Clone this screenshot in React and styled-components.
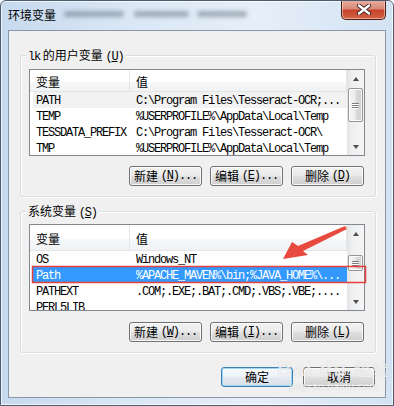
import React from 'react';
import styled, { createGlobalStyle } from 'styled-components';

const GlobalStyle = createGlobalStyle`
  html, body { margin: 0; padding: 0; background: #fff; }
  body { font-family: "Noto Sans CJK SC", sans-serif; font-size: 12px; color: #000; }
`;

const Window = styled.div`
  position: relative;
  width: 394px;
  height: 406px;
  box-sizing: border-box;
  border: 1px solid #4d5d70;
  border-radius: 6px 6px 0 0;
  background: linear-gradient(to right, #c6d9ee, #d9e6f4 30%, #e6eff9 65%, #d3e2f2);
  box-shadow: inset 0 0 0 1px rgba(255, 255, 255, 0.7);
  display: flex;
  flex-direction: column;
  overflow: hidden;
`;

const TitleBar = styled.div`
  height: 29px;
  display: flex;
  align-items: flex-start;
`;

const Title = styled.span`
  padding: 6px 0 0 7px;
  line-height: 16px;
  font-size: 12px;
  white-space: nowrap;
`;

const Ghost = styled.div`
  margin: 10px 0 0 ${p => p.$gap}px;
  width: ${p => p.$w}px;
  height: 6px;
  border-radius: 3px;
  background: rgba(40, 55, 75, 0.35);
  filter: blur(2px);
`;

const CloseButton = styled.div`
  width: 45px;
  height: 20px;
  box-sizing: border-box;
  margin: -1px 7px 0 auto;
  border: 1px solid #4a1f16;
  border-top: none;
  border-radius: 0 0 5px 5px;
  background: linear-gradient(#eab0a2, #d98a78 45%, #c54229 55%, #d46446);
  box-shadow: inset 0 0 0 1px rgba(255, 220, 210, 0.55);
  display: flex;
  align-items: center;
  justify-content: center;
`;

const Client = styled.div`
  flex: 1;
  margin: 0 7px 7px 7px;
  border: 1px solid #8896a8;
  background: #f0f0f0;
  display: flex;
  flex-direction: column;
`;

const Group = styled.div`
  position: relative;
  margin: ${p => p.$top}px 9px 0 11px;
  border: 1px solid #d5dfe5;
  border-radius: 3px;
  box-shadow: inset 1px 1px 0 #fff, 1px 1px 0 #fff;
  padding: ${p => p.$pad}px 10px 10px 8px;
  display: flex;
  flex-direction: column;
`;

const Legend = styled.span`
  position: absolute;
  left: 5px;
  top: -8px;
  padding: 0 2px;
  line-height: 14px;
  background: #f0f0f0;
  white-space: nowrap;
`;

const Latin = styled.span`
  font-family: "Liberation Mono", monospace;
  font-size: 12px;
  letter-spacing: -1.2px;
`;

const List = styled.div`
  height: 87px;
  box-sizing: border-box;
  border: 1px solid #828790;
  background: #fff;
  display: flex;
  overflow: hidden;
`;

const ListBody = styled.div`
  flex: 1;
  display: flex;
  flex-direction: column;
  overflow: hidden;
`;

const Header = styled.div`
  flex: none;
  height: ${p => p.$h}px;
  display: grid;
  grid-template-columns: 100px 1fr;
  background: linear-gradient(#ffffff, #ffffff 55%, #f7f8fa 55%, #f1f2f4);
  border-bottom: 1px solid #e5e5e5;
`;

const HeaderCell = styled.div`
  display: flex;
  align-items: center;
  padding: 2px 0 0 6px;
  border-right: 1px solid #e5e5e5;
  font-size: 12px;
`;

const Row = styled.div`
  flex: none;
  height: 16px;
  margin-left: 3px;
  display: grid;
  grid-template-columns: 97px 1fr;
  align-items: center;
  white-space: nowrap;
  overflow: hidden;
  background: ${p => (p.$selected ? '#3399ff' : p.$hot ? '#f2f2f2' : 'transparent')};
  color: ${p => (p.$selected ? '#fff' : '#000')};
  font-family: "Liberation Mono", monospace;
  font-size: 12px;
  letter-spacing: -1.2px;
  line-height: 16px;
  padding-top: 1px;
  box-sizing: border-box;
`;

const Cell = styled.span`
  padding-left: ${p => p.$pad}px;
  overflow: hidden;
`;

const ScrollBar = styled.div`
  flex: none;
  width: 17px;
  display: flex;
  flex-direction: column;
  background: linear-gradient(to right, #e2e3e5, #eeeff0 30%, #f5f5f6);
`;

const ArrowBox = styled.div`
  flex: none;
  height: 17px;
  display: flex;
  align-items: center;
  justify-content: center;
`;

const Arrow = styled.span`
  width: 0;
  height: 0;
  border-left: 3.5px solid transparent;
  border-right: 3.5px solid transparent;
  ${p => (p.$down ? 'border-top: 4px solid #4e4e4e;' : 'border-bottom: 4px solid #4e4e4e;')}
`;

const Track = styled.div`
  flex: 1;
  display: flex;
  flex-direction: column;
  align-items: center;
`;

const Thumb = styled.div`
  margin-top: ${p => p.$top}px;
  width: 15px;
  height: ${p => p.$h}px;
  box-sizing: border-box;
  border: 1px solid #979797;
  border-radius: 2px;
  background: linear-gradient(to right, #f5f5f5, #ececec 45%, #dadada 55%, #cfcfcf);
  box-shadow: inset 0 0 0 1px rgba(255, 255, 255, 0.8);
  display: flex;
  flex-direction: column;
  align-items: center;
  justify-content: center;
  gap: 1px;
`;

const Grip = styled.span`
  width: 7px;
  height: 1px;
  background: #7d7d7d;
  box-shadow: 0 1px 0 #fff;
`;

const ButtonRow = styled.div`
  display: flex;
  justify-content: flex-end;
  gap: ${p => p.$gap}px;
  margin-top: ${p => p.$top}px;
  padding-right: ${p => p.$right}px;
`;

const Button = styled.div`
  width: ${p => p.$w}px;
  height: 20px;
  box-sizing: border-box;
  border: 1px solid ${p => (p.$default ? '#3c7fb1' : '#707070')};
  border-radius: 3px;
  background: ${p =>
    p.$default
      ? 'linear-gradient(#f7fbfe, #eef4f9 45%, #e2e9ef 55%, #d8e2ea)'
      : 'linear-gradient(#f2f2f2, #ebebeb 45%, #dddddd 55%, #cfcfcf)'};
  box-shadow: ${p =>
    p.$default ? 'inset 0 0 0 1px #9fd5f5' : 'inset 0 0 0 1px rgba(255, 255, 255, 0.85)'};
  display: flex;
  align-items: center;
  justify-content: center;
  font-size: 12px;
  line-height: 16px;
  white-space: nowrap;
`;

const Overlay = styled.svg`
  position: absolute;
  left: -1px;
  top: -1px;
  pointer-events: none;
`;

const Watermark = styled.div`
  position: absolute;
  left: 276px;
  top: 356px;
  display: flex;
  flex-direction: column;
  align-items: center;
  pointer-events: none;
  color: rgba(255, 255, 255, 0.7);
  text-shadow: 0 0 1px rgba(120, 120, 120, 0.3);
`;

const MarkTitle = styled.span`
  font-family: "Liberation Sans", sans-serif;
  font-weight: bold;
  font-size: 21px;
  line-height: 24px;
  letter-spacing: 1px;
  white-space: nowrap;
  small { font-family: "Noto Sans CJK SC", sans-serif; font-size: 17px; font-weight: normal; line-height: 20px; }
`;

const MarkUrl = styled.span`
  font-family: "Liberation Sans", sans-serif;
  font-size: 10px;
  line-height: 12px;
  letter-spacing: 0.5px;
`;

const userVars = [
  ['PATH', 'C:\\Program Files\\Tesseract-OCR;...'],
  ['TEMP', '%USERPROFILE%\\AppData\\Local\\Temp'],
  ['TESSDATA_PREFIX', 'C:\\Program Files\\Tesseract-OCR\\'],
  ['TMP', '%USERPROFILE%\\AppData\\Local\\Temp'],
];

const sysVars = [
  ['OS', 'Windows_NT'],
  ['Path', '%APACHE_MAVEN%\\bin;%JAVA_HOME%\\...'],
  ['PATHEXT', '.COM;.EXE;.BAT;.CMD;.VBS;.VBE;....'],
  ['PERL5LIB', ''],
];

const VarList = ({ rows, headerH, hot, selected, thumbTop, thumbH }) => (
  <List>
    <ListBody>
      <Header $h={headerH}>
        <HeaderCell>变量</HeaderCell>
        <HeaderCell>值</HeaderCell>
      </Header>
      {rows.map(([name, value], i) => (
        <Row key={name} $hot={i === hot} $selected={i === selected}>
          <Cell $pad={3}>{name}</Cell>
          <Cell $pad={6}>{value}</Cell>
        </Row>
      ))}
    </ListBody>
    <ScrollBar>
      <ArrowBox><Arrow /></ArrowBox>
      <Track>
        <Thumb $top={thumbTop} $h={thumbH}>
          <Grip /><Grip /><Grip />
        </Thumb>
      </Track>
      <ArrowBox><Arrow $down /></ArrowBox>
    </ScrollBar>
  </List>
);

const Mnemonic = ({ label, k, dots }) => (
  <>
    {label}&nbsp;<Latin>(<u>{k}</u>){dots ? '...' : ''}</Latin>
  </>
);

export default function App() {
  return (
    <>
      <GlobalStyle />
      <Window>
        <TitleBar>
          <Title>环境变量</Title>
          <Ghost $gap={8} $w={60} />
          <Ghost $gap={10} $w={55} />
          <Ghost $gap={8} $w={50} />
          <CloseButton>
            <svg width="16" height="11" viewBox="0 0 16 11">
              <path d="M3 1.5 L13 9.5 M13 1.5 L3 9.5" stroke="#3a2520" strokeWidth="4.2" strokeLinecap="round" />
              <path d="M3 1.5 L13 9.5 M13 1.5 L3 9.5" stroke="#fff" strokeWidth="2.4" strokeLinecap="round" />
            </svg>
          </CloseButton>
        </TitleBar>
        <Client>
          <Group $top={24} $pad={13}>
            <Legend><Latin>lk</Latin> 的用户变量 <Latin>(<u>U</u>)</Latin></Legend>
            <VarList rows={userVars} headerH={21} hot={0} thumbTop={1} thumbH={34} />
            <ButtonRow $gap={8} $top={10} $right={1}>
              <Button $w={73}><Mnemonic label="新建" k="N" dots /></Button>
              <Button $w={73}><Mnemonic label="编辑" k="E" dots /></Button>
              <Button $w={73}><Mnemonic label="删除" k="D" /></Button>
            </ButtonRow>
          </Group>
          <Group $top={14} $pad={12}>
            <Legend>系统变量 <Latin>(<u>S</u>)</Latin></Legend>
            <VarList rows={sysVars} headerH={25} selected={1} thumbTop={13} thumbH={16} />
            <ButtonRow $gap={8} $top={11} $right={1}>
              <Button $w={73}><Mnemonic label="新建" k="W" dots /></Button>
              <Button $w={73}><Mnemonic label="编辑" k="I" dots /></Button>
              <Button $w={73}><Mnemonic label="删除" k="L" /></Button>
            </ButtonRow>
          </Group>
          <ButtonRow $gap={10} $top={14} $right={10}>
            <Button $w={72} $default>确定</Button>
            <Button $w={72}>取消</Button>
          </ButtonRow>
        </Client>
        <Watermark>
          <MarkTitle>Bai du <small>经验</small></MarkTitle>
          <MarkUrl>jingyan.baidu.com</MarkUrl>
        </Watermark>
        <Overlay width="394" height="406" viewBox="0 0 394 406">
          <rect x="32.5" y="266.5" width="333" height="16" fill="none" stroke="#e8403a" strokeWidth="1.5" />
          <polygon
            points="283,259 292,242 298,246 345,226 347,229 303,251 308,255"
            fill="#e84a3f"
          />
        </Overlay>
      </Window>
    </>
  );
}
